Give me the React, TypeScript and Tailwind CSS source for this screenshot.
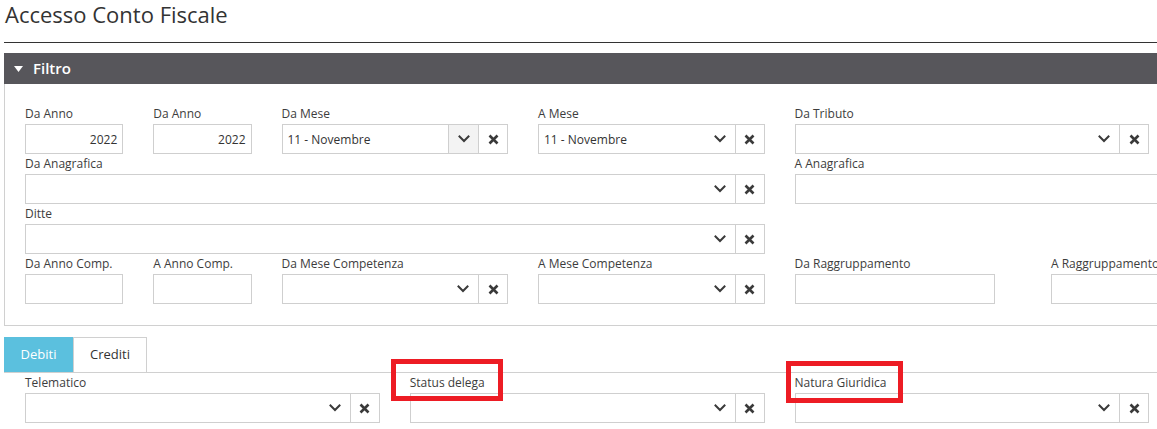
import type { ReactNode } from 'react'

const spanClass: Record<number, string> = {
  1: 'col-span-1',
  2: 'col-span-2',
  3: 'col-span-3',
  6: 'col-span-6',
}

function Chevron() {
  return (
    <svg width="12" height="8" viewBox="0 0 12 8" fill="none">
      <path d="M1.5 1.5 L6 6 L10.5 1.5" stroke="#3a3a3a" strokeWidth="2" strokeLinecap="square" />
    </svg>
  )
}

function Cross() {
  return (
    <svg width="11" height="11" viewBox="0 0 11 11" fill="none">
      <path d="M1.5 1.5 L9.5 9.5 M9.5 1.5 L1.5 9.5" stroke="#3a3a3a" strokeWidth="2.6" />
    </svg>
  )
}

function Field({ label, span = 1, children }: { label?: string; span?: number; children?: ReactNode }) {
  return (
    <div className={spanClass[span]}>
      <div className="h-[20px] text-[12px] leading-[19px] text-[#3d3d3d] whitespace-nowrap">{label}</div>
      {children}
    </div>
  )
}

function Select({ value, active }: { value?: string; active?: boolean }) {
  return (
    <div className="flex h-[30px] border border-[#cfcfcf] bg-white">
      <div className="flex-1 px-[5px] text-[12px] leading-[29px] text-[#333]">{value}</div>
      <div
        className={
          active
            ? 'w-[30px] flex items-center justify-center bg-[#f3f3f3] border-l border-[#cfcfcf]'
            : 'w-[30px] flex items-center justify-center'
        }
      >
        <Chevron />
      </div>
      <div className="w-[29px] flex items-center justify-center border-l border-[#cfcfcf]">
        <Cross />
      </div>
    </div>
  )
}

function TextInput({ value, className = '' }: { value?: string; className?: string }) {
  return (
    <div className={`h-[30px] border border-[#cfcfcf] bg-white px-[5px] text-right text-[12px] leading-[29px] text-[#333] ${className}`}>
      {value}
    </div>
  )
}

const gridClass = 'grid grid-cols-[repeat(12,98.25px)] gap-x-[30px]'

export default function App() {
  return (
    <div className="relative w-[1157px] h-[429px] overflow-hidden bg-white font-['Open_Sans',sans-serif] text-[#333]">
      <div className="w-[1620px] pl-[4px]">
        <h1 className="h-[42px] pl-[1px] text-[22px] leading-[28px] font-normal text-[#333]">Accesso Conto Fiscale</h1>
        <div className="border-t border-[#333]" />

        {/* ── Filtro panel ── */}
        <div className="mt-[10px]">
          <div className="h-[31px] bg-[#57565b] flex items-center pl-[10px] gap-[10px] text-white">
            <svg width="9" height="6" viewBox="0 0 9 6">
              <path d="M0 0 H9 L4.5 6 Z" fill="#fff" />
            </svg>
            <span className="text-[15px] font-semibold">Filtro</span>
          </div>
          <div className="border-l border-b border-[#d0d0d0] pl-[20px] pt-[20px] pb-[21px]">
            <div className={gridClass}>
              <Field label="Da Anno"><TextInput value="2022" /></Field>
              <Field label="Da Anno"><TextInput value="2022" /></Field>
              <Field label="Da Mese" span={2}><Select value="11 - Novembre" active /></Field>
              <Field label="A Mese" span={2}><Select value="11 - Novembre" /></Field>
              <Field label="Da Tributo" span={3}><Select /></Field>
              <div className="col-span-3" />

              <Field label="Da Anagrafica" span={6}><Select /></Field>
              <Field label="A Anagrafica" span={6}><TextInput /></Field>

              <Field label="Ditte" span={6}><Select /></Field>
              <div className="col-span-6" />

              <Field label="Da Anno Comp."><TextInput /></Field>
              <Field label="A Anno Comp."><TextInput /></Field>
              <Field label="Da Mese Competenza" span={2}><Select /></Field>
              <Field label="A Mese Competenza" span={2}><Select /></Field>
              <Field label="Da Raggruppamento" span={2}><TextInput className="w-[200px]" /></Field>
              <Field label="A Raggruppamento" span={2}><TextInput /></Field>
            </div>
          </div>
        </div>

        {/* ── Tabs ── */}
        <div className="mt-[11px] flex h-[36px] border-b border-[#d0d0d0]">
          <div className="w-[69px] bg-[#5bc0de] text-white text-[13px] flex items-center justify-center border border-[#5bc0de]">
            Debiti
          </div>
          <div className="w-[74px] border border-b-0 border-[#d0d0d0] text-[13px] text-[#333] flex items-center justify-center">
            Crediti
          </div>
        </div>
        <div className="pl-[21px]">
          <div className={gridClass}>
            <Field label="Telematico" span={3}><Select /></Field>
            <Field label="Status delega" span={3}><Select /></Field>
            <Field label="Natura Giuridica" span={3}><Select /></Field>
          </div>
        </div>
      </div>

      {/* annotation boxes */}
      <div className="absolute left-[391px] top-[359px] w-[112px] h-[42px] border-[5px] border-[#ed1c24]" />
      <div className="absolute left-[786px] top-[361px] w-[117px] h-[42px] border-[5px] border-[#ed1c24]" />
    </div>
  )
}
